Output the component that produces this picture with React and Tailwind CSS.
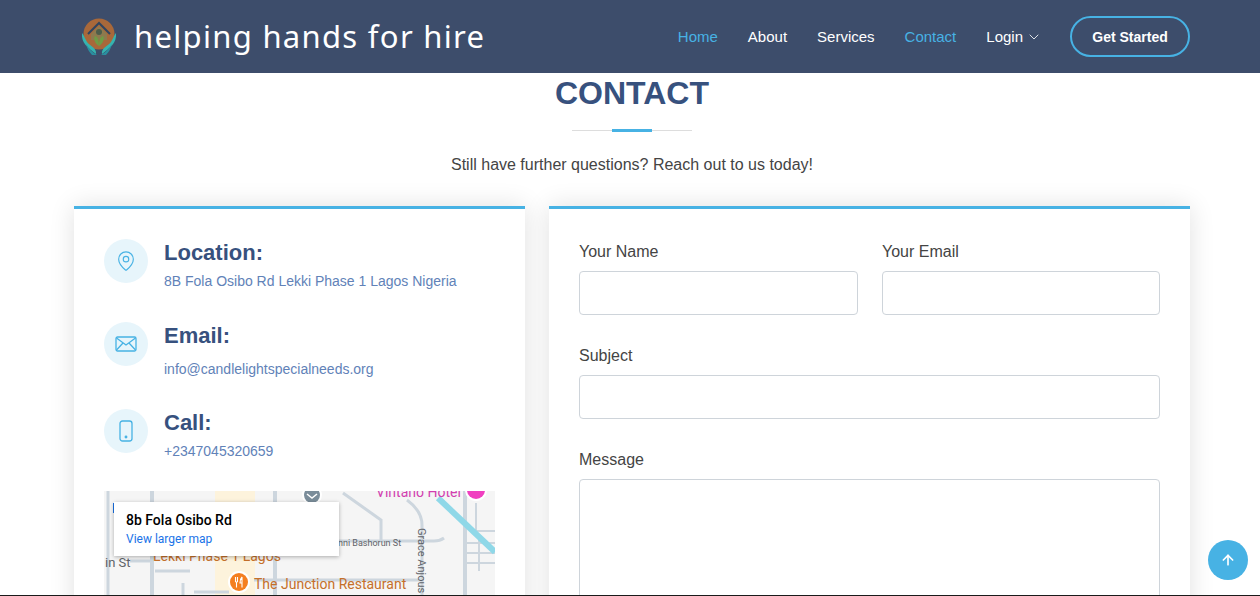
import React from 'react';
import { ArrowUp, ChevronDown, MapPin } from 'lucide-react';

const Logo = () => (
    <svg width="38" height="38" viewBox="0 0 38 38" className="shrink-0">
        <circle cx="19" cy="16" r="15.5" fill="#a8683a" />
        <path d="M8 16 L19 5 L30 16" fill="none" stroke="#2f4560" strokeWidth="2" />
        <path d="M11 16 L19 8 L27 16 L27 22 L11 22Z" fill="#8d7a4e" />
        <circle cx="19" cy="14" r="3" fill="#4d5d4a" />
        <path d="M19 28 C13 24 14 19 15 18 C18 19 19 22 19 28 C19 22 20 19 23 18 C24 19 25 24 19 28Z" fill="#6f9c45" />
        <path d="M2 15 C1 25 8 30 16 36 C17 30 10 28 7 24 C5 21 4 17 2 15Z" fill="#35b4b0" />
        <path d="M36 15 C37 25 30 30 22 36 C21 30 28 28 31 24 C33 21 34 17 36 15Z" fill="#35b4b0" />
        <path d="M6 26 C9 31 12 34 17 37 L12 37 C9 34 7 30 6 26Z" fill="#2a8fa0" />
        <path d="M32 26 C29 31 26 34 21 37 L26 37 C29 34 31 30 32 26Z" fill="#2a8fa0" />
    </svg>
);

const NavLink = ({ label, active }) => (
    <a className={`text-[15px] leading-[22px] ${active ? 'text-[#47b2e4]' : 'text-white'}`}>{label}</a>
);

const IconCircle = ({ children }) => (
    <div className="w-11 h-11 rounded-full bg-[#e7f5fb] flex items-center justify-center shrink-0 text-[#47b2e4]">
        {children}
    </div>
);

const MailIcon = () => (
    <svg width="22" height="16" viewBox="0 0 22 16" fill="none" stroke="currentColor" strokeWidth="1.3">
        <rect x="1" y="1" width="20" height="14" rx="1.5" />
        <path d="M1.5 2 L11 9 L20.5 2 M1.5 14 L8 7 M20.5 14 L14 7" />
    </svg>
);

const PhoneIcon = () => (
    <svg width="14" height="22" viewBox="0 0 14 22" fill="none" stroke="currentColor" strokeWidth="1.3">
        <rect x="1" y="1" width="12" height="20" rx="2.5" />
        <circle cx="7" cy="17" r="0.8" fill="currentColor" />
    </svg>
);

const InfoRow = ({ icon, title, text, rowClass, gap }) => (
    <div className={`flex gap-4 ${rowClass}`}>
        <IconCircle>{icon}</IconCircle>
        <div className="pt-px">
            <h3 className={`text-[22px] leading-[26px] font-bold text-[#37517e] ${gap}`}>{title}</h3>
            <p className="text-sm leading-[21px] text-[#6182b8]">{text}</p>
        </div>
    </div>
);

// just the part of the map that shows above the fold
const MapDrawing = () => (
    <svg width="391" height="105" viewBox="0 0 391 105" className="block" style={{ fontFamily: 'Roboto, sans-serif' }}>
        <rect width="391" height="105" fill="#f5f5f5" />
        <rect x="111" y="0" width="40" height="105" fill="#fdf3dc" />
        <g fill="none" stroke="#cdd6de" strokeWidth="3">
            <path d="M4 0 V105" />
            <path d="M48 0 V105" strokeWidth="4" />
            <path d="M26 70 H50" />
            <path d="M51 80 H86" />
            <path d="M79 92 V105" />
            <path d="M90 101 H125" />
            <path d="M171 0 V105" strokeWidth="4" />
            <path d="M239 2 L277 29 V49" />
            <path d="M234 50 H330 Q336 50 340 47" />
            <path d="M303 9 Q318 20 318 34 V105" />
            <path d="M150 89 H320" />
            <path d="M361 0 V105" strokeWidth="4" />
            <path d="M361 52 H391 M361 62 H391 M361 72 H391 M375 48 V80" strokeWidth="2" />
            <path d="M372 12 V40 H391" strokeWidth="2" />
        </g>
        <path d="M334 7 L391 61" stroke="#8fd8e8" strokeWidth="6" />
        <text x="272" y="6" fontSize="14" fill="#d23fb0">Vintano Hotel</text>
        <circle cx="372" cy="-1" r="11" fill="#fff" />
        <circle cx="372" cy="-1" r="9" fill="#f03fc0" />
        <circle cx="208" cy="4" r="10" fill="#fff" />
        <circle cx="208" cy="4" r="8" fill="#7b8d9a" />
        <path d="M203 3 L208 7 L213 3" fill="none" stroke="#fff" strokeWidth="1.5" />
        <text x="1" y="76" fontSize="13" fill="#5f6368">in St</text>
        <text x="49" y="70" fontSize="14" fill="#c5702a">Lekki Phase 1 Lagos</text>
        <text x="234" y="55" fontSize="9" fill="#5f6368">nni Bashorun St</text>
        <text x="0" y="0" fontSize="11" fill="#5f6368" transform="translate(314 37) rotate(90)">Grace Anjous</text>
        <circle cx="135" cy="91" r="11" fill="#fff" />
        <circle cx="135" cy="91" r="9" fill="#f47f20" />
        <path d="M131.5 86 V91 M133.5 86 V91 M131.5 91 H133.5 M132.5 91 V96.5 M138 86 V96.5 M138 86 Q136 88 136 92 H138" fill="none" stroke="#fff" strokeWidth="1.1" />
        <text x="150" y="98" fontSize="14" fill="#c5702a">The Junction Restaurant</text>
        <path d="M9.5 12 V22" stroke="#1a73e8" strokeWidth="1" />
    </svg>
);

const Field = ({ label, className, inputClass }) => (
    <div className={className}>
        <label className="block text-base leading-6 text-[#444444] mb-[7px]">{label}</label>
        <div className={`w-full rounded border border-[#ced4da] bg-white ${inputClass}`}></div>
    </div>
);

export default function App() {
    return (
        <div className="relative h-[596px] overflow-hidden bg-white font-['Liberation_Sans',Arial,sans-serif]">
            {/* Header */}
            <header className="h-[73px] bg-[#3d4d6b] pl-[74px] flex items-center">
                <div className="w-[1116px] flex items-center justify-between">
                    <div className="flex items-center gap-[16px] pl-[6px]">
                        <Logo />
                        <span className="font-['Noto_Sans',sans-serif] text-[31px] leading-none tracking-[1.3px] text-white">helping hands for hire</span>
                    </div>
                    <nav className="flex items-center gap-[30px]">
                        <NavLink label="Home" active />
                        <NavLink label="About" />
                        <NavLink label="Services" />
                        <NavLink label="Contact" active />
                        <div className="flex items-center gap-[3px] -mr-[2px]">
                            <NavLink label="Login" />
                            <ChevronDown className="w-4 h-4 text-white" strokeWidth={1.25} />
                        </div>
                        <a className="w-[120px] h-[41px] rounded-full border-2 border-[#47b2e4] flex items-center justify-center text-sm font-bold text-white">Get Started</a>
                    </nav>
                </div>
            </header>

            {/* Section title */}
            <div className="pl-[74px]">
                <div className="w-[1116px]">
                    <div className="flex flex-col items-center">
                        <h2 className="text-[32px] leading-10 font-bold text-[#37517e]">CONTACT</h2>
                        <div className="relative w-[120px] h-px bg-[#dddddd] mt-[17px]">
                            <span className="absolute left-10 -top-px w-10 h-[3px] bg-[#47b2e4]"></span>
                        </div>
                        <p className="mt-[22px] text-base leading-6 text-[#444444]">Still have further questions? Reach out to us today!</p>
                    </div>

                    {/* Cards */}
                    <div className="mt-[29px] flex gap-6">
                        <div className="w-[451px] h-[500px] shrink-0 border-t-[3px] border-[#47b2e4] bg-white p-[30px] shadow-[0_0_24px_rgba(0,0,0,0.12)]">
                            <InfoRow icon={<MapPin className="w-[22px] h-[22px]" strokeWidth={1.25} />} title="Location:" text="8B Fola Osibo Rd Lekki Phase 1 Lagos Nigeria" rowClass="mb-[30px]" gap="mb-[5px]" />
                            <InfoRow icon={<MailIcon />} title="Email:" text="info@candlelightspecialneeds.org" rowClass="mb-[29px]" gap="mb-[10px]" />
                            <InfoRow icon={<PhoneIcon />} title="Call:" text="+2347045320659" rowClass="mb-[29px]" gap="mb-[5px]" />
                            <div className="relative w-[391px]">
                                <MapDrawing />
                                <div className="absolute left-[10px] top-[11px] w-[225px] h-[54px] bg-white shadow-[0_1px_4px_rgba(0,0,0,0.3)] px-3 pt-[9px] font-['Roboto',sans-serif]">
                                    <p className="text-sm leading-[19px] font-medium text-black">8b Fola Osibo Rd</p>
                                    <p className="text-xs leading-[18px] text-[#1a73e8]">View larger map</p>
                                </div>
                            </div>
                        </div>

                        <div className="w-[641px] h-[500px] shrink-0 border-t-[3px] border-[#47b2e4] bg-white px-[30px] pt-[31px] shadow-[0_0_24px_rgba(0,0,0,0.12)]">
                            <div className="flex gap-6 mb-[29px]">
                                <Field label="Your Name" className="w-[279px]" inputClass="h-11" />
                                <Field label="Your Email" className="w-[278px]" inputClass="h-11" />
                            </div>
                            <Field label="Subject" className="mb-[29px]" inputClass="h-11" />
                            <Field label="Message" inputClass="h-[220px]" />
                        </div>
                    </div>
                </div>
            </div>

            {/* Back to top */}
            <a className="absolute right-3 top-[540px] w-10 h-10 rounded-full bg-[#47b2e4] flex items-center justify-center">
                <ArrowUp className="w-4 h-4 text-white" strokeWidth={2.5} />
            </a>

            {/* dark line on the very bottom row */}
            <div className="absolute left-0 right-0 bottom-0 h-px bg-[#1a1a1a]"></div>
        </div>
    );
}
